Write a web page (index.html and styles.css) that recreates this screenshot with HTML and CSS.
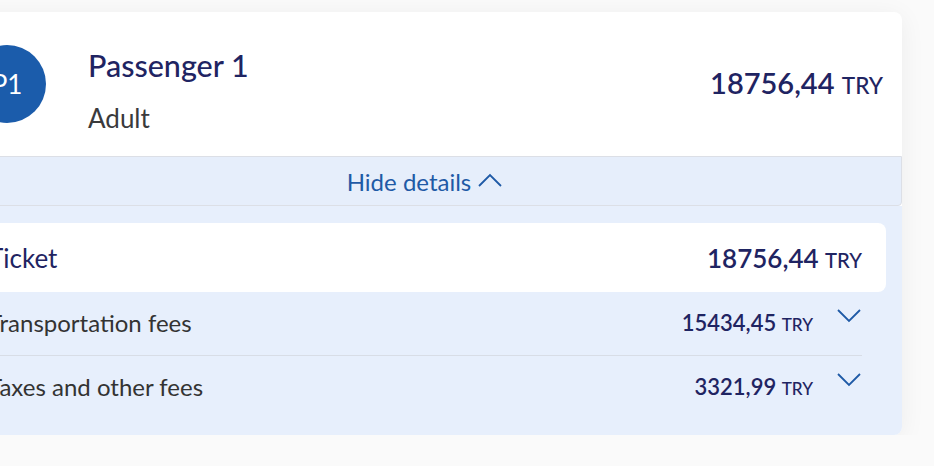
FILE: index.html
```html
<!DOCTYPE html>
<html lang="en">
<head>
  <meta charset="UTF-8" />
  <meta name="viewport" content="width=device-width, initial-scale=1.0"/>
  <title>Passenger fare details</title>
  <link rel="stylesheet" href="styles.css">
</head>
<body>

<div class="page">
  <div class="fare-card">

    <!-- passenger header -->
    <div class="passenger">
      <div class="avatar">P1</div>
      <div class="who">
        <div class="name">Passenger 1</div>
        <div class="type">Adult</div>
      </div>
      <div class="total">18756,44 <span class="cur">TRY</span></div>
    </div>

    <button class="toggle">
      Hide details
      <svg width="26" height="16" viewBox="0 0 26 16"><path d="M2 14 L13 3 L24 14" fill="none" stroke="#1f5aa6" stroke-width="1.8"/></svg>
    </button>

    <!-- breakdown -->
    <div class="details">
      <div class="ticket">
        <span class="ticket-label">Ticket</span>
        <span class="ticket-price">18756,44 <span class="cur">TRY</span></span>
      </div>
      <div class="fee">
        <span class="fee-label">Transportation fees</span>
        <span class="fee-price">15434,45 <span class="cur">TRY</span></span>
        <svg class="chev" width="26" height="16" viewBox="0 0 26 16"><path d="M2 3 L13 14 L24 3" fill="none" stroke="#1f5aa6" stroke-width="1.8"/></svg>
      </div>
      <div class="fee">
        <span class="fee-label">Taxes and other fees</span>
        <span class="fee-price">3321,99 <span class="cur">TRY</span></span>
        <svg class="chev" width="26" height="16" viewBox="0 0 26 16"><path d="M2 3 L13 14 L24 3" fill="none" stroke="#1f5aa6" stroke-width="1.8"/></svg>
      </div>
    </div>

  </div>
</div>

</body>
</html>
```

FILE: styles.css
```css
body {
  margin: 0;
  background: #fafafa;
  font-family: 'Lato', 'Liberation Sans', sans-serif;
  overflow: hidden;
}
.page {
  padding-top: 12px;
  margin-left: -52px;
  width: 954px;
}
.fare-card {
  background: #fff;
  border-radius: 8px;
  box-shadow: 0 4px 26px rgba(0, 0, 0, 0.06);
  overflow: hidden;
}
.passenger {
  display: flex;
  align-items: center;
  height: 144px;
  padding: 0 19px 0 20px;
}
.avatar {
  width: 78px;
  height: 78px;
  border-radius: 50%;
  background: #1b5cab;
  color: #fff;
  font-size: 26px;
  display: flex;
  align-items: center;
  justify-content: center;
  flex-shrink: 0;
}
.who {
  margin-left: 42px;
  padding-top: 11px;
  flex: 1;
}
.name {
  font-size: 30.5px;
  color: #1f2462;
  font-weight: 500;
  line-height: 36px;
}
.type {
  margin-top: 20px;
  font-size: 26px;
  color: #3a3a3c;
  line-height: 30px;
}
.total {
  font-size: 29px;
  color: #1f2462;
  font-weight: 600;
  margin-top: -4px;
}
.cur {
  font-size: 0.78em;
  font-weight: 500;
}
.toggle {
  display: flex;
  align-items: center;
  justify-content: center;
  gap: 6px;
  width: 100%;
  height: 50px;
  background: #e6eefb;
  border: 1px solid #dcdfe6;
  border-radius: 0 0 4px 4px;
  color: #1f5aa6;
  font-family: inherit;
  font-size: 24px;
  padding: 0;
  cursor: pointer;
}
.toggle svg {
  margin-top: -2px;
}
.details {
  background: #e7effc;
  padding: 17px 16px 16px;
}
.ticket {
  display: flex;
  justify-content: space-between;
  align-items: center;
  background: #fff;
  border-radius: 8px;
  height: 69px;
  padding: 0 24px;
  color: #1f2462;
}
.ticket-label {
  font-size: 26px;
}
.ticket-price {
  font-size: 26px;
  font-weight: 600;
}
.fee {
  display: flex;
  align-items: center;
  height: 63px;
  margin: 0 24px;
  border-bottom: 1px solid #d8dde6;
}
.fee:last-child {
  border-bottom: none;
}
.fee-label {
  flex: 1;
  font-size: 24px;
  color: #333;
  margin-top: -3px;
}
.fee-price {
  font-size: 22px;
  font-weight: 600;
  color: #1f2462;
  margin-top: -3px;
}
.chev {
  align-self: flex-start;
  margin: 15px 0 0 23px;
}
```
